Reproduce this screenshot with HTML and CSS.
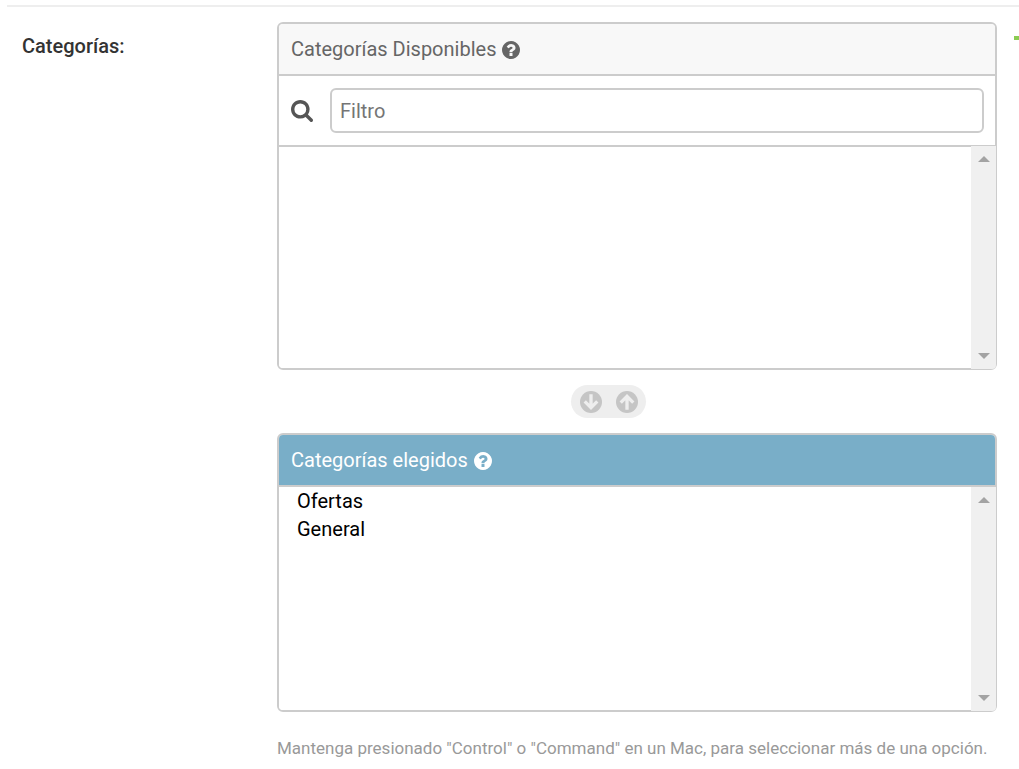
FILE: index.html
```html
<!DOCTYPE html>
<html lang="es">
<head>
<meta charset="utf-8">
<meta name="viewport" content="width=device-width, initial-scale=1">
<title>Categorías</title>
<link rel="stylesheet" href="styles.css">
</head>
<body>
<svg class="sprite" aria-hidden="true">
  <symbol id="question" viewBox="0 0 1536 1536">
    <path d="M896 1248v-192q0-14-9-23t-23-9H672q-14 0-23 9t-9 23v192q0 14 9 23t23 9h192q14 0 23-9t9-23zm256-672q0-88-55.500-163T958 297t-170-41q-243 0-371 213-15 24 8 42l132 100q7 6 19 6 16 0 25-12 53-68 86-92 34-24 86-24 48 0 85.500 26t37.500 59q0 38-20 61t-68 45q-63 28-115.500 86.500T640 892v36q0 14 9 23t23 9h192q14 0 23-9t9-23q0-19 21.500-49.500T972 829q32-18 49-28.500t46-35 44.500-48 28-60.500 12.500-81zm384 192q0 209-103 385.500T1153.500 1433 768 1536t-385.500-103T103 1153.500 0 768t103-385.500T382.500 103 768 0t385.500 103T1433 382.500 1536 768z"/>
  </symbol>
  <symbol id="search" viewBox="0 0 1664 1664">
    <path d="M1152 704q0-185-131.500-316.500T704 256 387.500 387.500 256 704t131.500 316.500T704 1152t316.500-131.500T1152 704zm512 832q0 52-38 90t-90 38q-54 0-90-38l-343-342q-179 124-399 124-143 0-273.500-55.500t-225-150-150-225T0 704t55.500-273.500 150-225 225-150T704 0t273.500 55.500 225 150 150 225T1408 704q0 220-124 399l343 343q37 37 37 90z"/>
  </symbol>
  <symbol id="arrow" viewBox="0 0 20 20">
    <circle cx="10" cy="10" r="10"/>
    <path class="stroke" d="M10 3v12M4.300 9.500l5.700 5.700 5.700-5.700"/>
  </symbol>
  <symbol id="caret" viewBox="0 0 12 6"><path d="M0 6l6-6 6 6z"/></symbol>
</svg>
<main class="form-row">
  <label class="row-label" for="chosen">Categorías:</label>
  <div class="selector">
    <section class="panel available">
      <h2 class="panel-title"><label for="available">Categorías Disponibles</label><svg class="help-icon" aria-hidden="true"><use href="#question"/></svg></h2>
      <div class="filter">
        <label class="filter-label" for="filter" aria-label="Filtro"><svg class="search-icon" aria-hidden="true"><use href="#search"/></svg></label>
        <input class="filter-input" id="filter" type="text" placeholder="Filtro">
      </div>
      <div class="list">
        <select class="options" id="available" multiple></select>
        <div class="scrollbar" aria-hidden="true"><svg class="caret"><use href="#caret"/></svg><svg class="caret down"><use href="#caret"/></svg></div>
      </div>
    </section>
    <div class="chooser">
      <button class="move" type="button" aria-label="Elegir"><svg class="move-icon"><use href="#arrow"/></svg></button>
      <button class="move" type="button" aria-label="Eliminar"><svg class="move-icon up"><use href="#arrow"/></svg></button>
    </div>
    <section class="panel chosen">
      <h2 class="panel-title"><label for="chosen">Categorías elegidos</label><svg class="help-icon" aria-hidden="true"><use href="#question"/></svg></h2>
      <div class="list">
        <select class="options" id="chosen" multiple><option>Ofertas</option><option>General</option></select>
        <div class="scrollbar" aria-hidden="true"><svg class="caret"><use href="#caret"/></svg><svg class="caret down"><use href="#caret"/></svg></div>
      </div>
    </section>
    <p class="help">Mantenga presionado "Control" o "Command" en un Mac, para seleccionar más de una opción.</p>
  </div>
  <a class="add-link" href="#" aria-label="Agregar"></a>
</main>
</body>
</html>
```
FILE: styles.css
```css
* { box-sizing: border-box; }
body {
  margin: 0;
  padding: 5px 0 0 7px;
  background: #fff;
  color: #333;
  font: 20px/28px Roboto, sans-serif;
}
.sprite { position: absolute; width: 0; height: 0; }
.form-row {
  display: grid;
  grid-template-columns: 255px 1fr 5px;
  padding: 15px 0 0 15px;
  border-top: 2px solid #eee;
}
.row-label { padding-top: 10px; font-weight: 500; }
.selector { margin-right: 17px; }
.panel { border: 2px solid #ccc; border-radius: 6px; }
.panel-title {
  display: flex;
  align-items: center;
  gap: 6px;
  height: 52px;
  margin: 0;
  padding: 0 12px;
  border-bottom: 2px solid #ccc;
  border-radius: 4px 4px 0 0;
  background: #f8f8f8;
  color: #666;
  font-size: 20px;
  font-weight: 400;
}
.chosen .panel-title { background: #79aec8; color: #fff; }
.help-icon { width: 18px; height: 18px; margin-top: 2px; fill: currentColor; }
.filter {
  display: flex;
  align-items: center;
  gap: 17px;
  height: 71px;
  padding: 0 11px 0 12px;
  border-bottom: 2px solid #ccc;
}
.filter-label { display: flex; }
.search-icon { width: 22px; height: 22px; fill: #555; }
.filter-input {
  flex: 1;
  min-width: 0;
  height: 45px;
  padding: 0 8px;
  border: 2px solid #ccc;
  border-radius: 6px;
  background: #fff;
  font: inherit;
}
.filter-input::placeholder { color: #757575; opacity: 1; }
.list { display: flex; height: 221px; }
.chosen .list { height: 223px; }
.options {
  flex: 1;
  min-width: 0;
  padding: 2px 0 0;
  border: 0;
  border-radius: 0 0 0 4px;
  outline: 0;
  background: #fff;
  color: #000;
  font: inherit;
  scrollbar-width: none;
}
.options option { min-height: 28px; padding: 0 18px; line-height: 28px; }
.scrollbar {
  display: flex;
  flex-direction: column;
  align-items: center;
  justify-content: space-between;
  width: 25px;
  margin: 0 -1px -1px 0;
  padding: 10px 0;
  border-radius: 0 0 4px 0;
  background: #f0f0f0;
}
.available .scrollbar { margin-top: -1px; }
.caret { width: 12px; height: 6px; fill: #a3a3a3; }
.down { transform: rotate(180deg); }
.chooser {
  display: flex;
  align-items: center;
  gap: 14px;
  width: 75px;
  height: 33px;
  margin: 15px 0 15px calc(50% - 66px);
  padding: 0 9px;
  border-radius: 17px;
  background: #eee;
}
.move {
  display: flex;
  padding: 0;
  border: 0;
  background: none;
}
.move-icon { width: 22px; height: 22px; fill: #c5c5c5; }
.stroke { fill: none; stroke: #eee; stroke-width: 3; }
.up { transform: rotate(180deg); }
.help {
  margin: 23px 0 0;
  color: #999;
  font-size: 17px;
  line-height: 26px;
}
.add-link { height: 4px; margin-top: 14px; background: #8bcb52; }
```
